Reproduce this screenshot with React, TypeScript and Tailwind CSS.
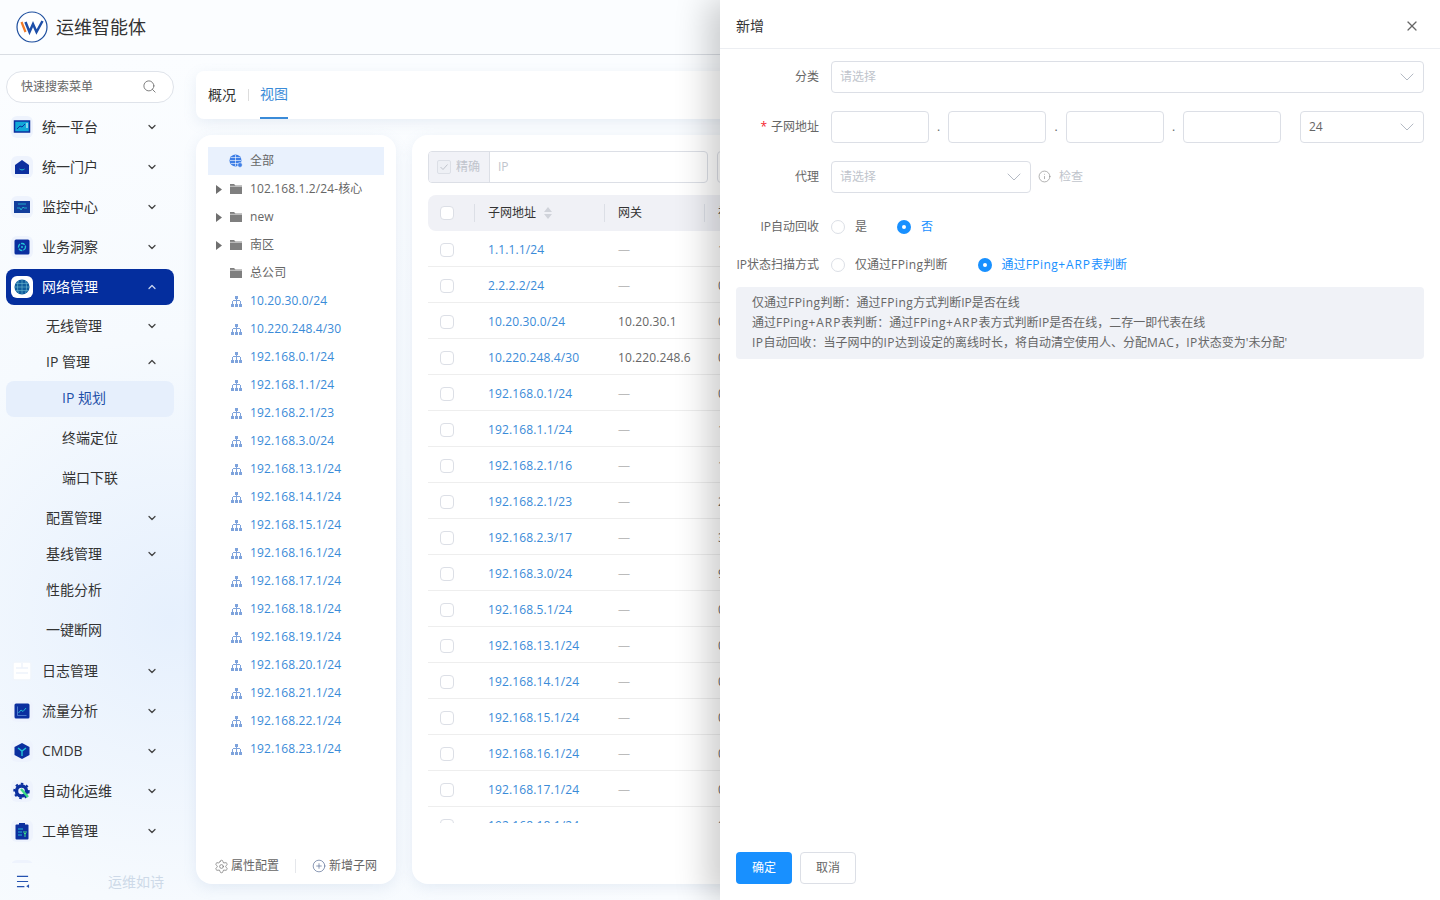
import { ChevronDown, ChevronUp, Search, X, Settings, CirclePlus, Info } from "lucide-react";

const F = "font-['Open_Sans','Noto_Sans_CJK_SC',sans-serif]";

function Ic({ kind }: { kind: string }) {
  const navy = "#0b2f9f";
  const cyan = "#22c3d6";
  if (kind === "log") {
    return (
      <svg width="22" height="22" viewBox="0 0 22 22"><rect x="2" y="2" width="18" height="18" rx="2" fill="#ffffff" stroke="#f0f5fc" strokeWidth="1.5" /><path d="M5 8h12M5 13h12M11 3v5" stroke="#eef3fb" strokeWidth="1.5" /></svg>
    );
  }
  if (kind === "globe") {
    return (
      <svg width="16" height="16" viewBox="0 0 18 18"><circle cx="9" cy="9" r="8.5" fill="#0f5d9c" /><path d="M1 9h16M2 5h14M2 13h14M9 1v16M5 2c-1.500 4-1.500 10 0 14M13 2c1.500 4 1.500 10 0 14" stroke="#6bbad0" strokeWidth="0.7" fill="none" /></svg>
    );
  }
  return (
    <svg width="18" height="18" viewBox="0 0 18 18">
      {kind === "plat" && (<><rect x="1.500" y="3" width="15" height="11" fill="#11a8d8" stroke={navy} strokeWidth="1.500" /><path d="M4 11l3-3 2 1 3-3" stroke={navy} fill="none" strokeWidth="1" /><path d="M14 5v5" stroke="#fff" strokeWidth="1" /></>)}
      {kind === "door" && (<><path d="M9 2l7 5v9H2V7z" fill={navy} /><path d="M6.500 11c1.500 1.200 3.500 1.200 5 0" stroke={cyan} strokeWidth="1" fill="none" /></>)}
      {kind === "mon" && (<><rect x="1" y="3" width="16" height="12" fill="#123e9c" /><path d="M5 6h8M4 10h3l1 2 2-3 1 1h3" stroke={cyan} strokeWidth="0.8" fill="none" /></>)}
      {kind === "biz" && (<><rect x="1.500" y="1.500" width="15" height="15" rx="1.500" fill={navy} /><circle cx="9" cy="9" r="3.500" stroke={cyan} strokeWidth="1.300" fill="none" strokeDasharray="4 1" /><circle cx="9" cy="9" r="1" fill={cyan} /></>)}
      {kind === "flow" && (<><rect x="1.500" y="1.500" width="15" height="15" rx="1.500" fill={navy} /><path d="M4.500 4.500v9h9" stroke="#5b8ad8" strokeWidth="0.8" fill="none" /><path d="M5.500 11l2.500-3 2 1.500 3-3.500" stroke={cyan} strokeWidth="0.9" fill="none" /></>)}
      {kind === "cube" && (<><path d="M9 1l7.500 4v8L9 17l-7.500-4V5z" fill={navy} /><path d="M5 6l4 3 4-3M9 9v5" stroke={cyan} strokeWidth="1.400" fill="none" /></>)}
      {kind === "auto" && (<><circle cx="8.500" cy="9" r="5" fill="none" stroke={navy} strokeWidth="3.500" /><circle cx="8.500" cy="9" r="7.200" fill="none" stroke={navy} strokeWidth="2" strokeDasharray="2.500 3" /><path d="M8 7l7 8" stroke="#3ddc84" strokeWidth="2.400" /></>)}
      {kind === "order" && (<><rect x="2.500" y="2.500" width="13" height="15" rx="1" fill={navy} /><rect x="6" y="1" width="6" height="2.500" fill={navy} /><path d="M5 7h5M5 10h4M5 13h4" stroke={cyan} strokeWidth="0.9" /><path d="M11 9v2l1 1 1-1V9M12 12v3" stroke="#3ddc84" strokeWidth="1" fill="none" /></>)}
    </svg>
  );
}

function Top({ icon, label, active, open, grey }: { icon: string; label: string; active?: boolean; open?: boolean; grey?: boolean }) {
  return (
    <div className={`h-9 shrink-0 mx-1.5 flex items-center rounded-lg pl-[5px] pr-4 ${active ? "bg-[#042e9e]" : ""}`}>
      <div className={`w-[22px] h-[22px] rounded-md flex items-center justify-center shrink-0 ${active ? "bg-white" : grey ? "" : "bg-[#eef3fd]"}`}>
        <Ic kind={icon} />
      </div>
      <span className={`ml-[9px] flex-1 text-sm leading-none ${active ? "text-white" : "text-[#333333]"}`}>{label}</span>
      {open ? <ChevronUp size={12} strokeWidth={2.500} className="text-[#c8d4ee]" /> : <ChevronDown size={12} strokeWidth={2.500} className="text-[#444444]" />}
    </div>
  );
}

function Sub({ label, open }: { label: string; open?: boolean }) {
  return (
    <div className="h-9 shrink-0 mx-1.5 flex items-center pl-10 pr-4">
      <span className="flex-1 text-sm leading-none text-[#333333]">{label}</span>
      {open === undefined ? null : open ? <ChevronUp size={12} strokeWidth={2.500} className="text-[#444444]" /> : <ChevronDown size={12} strokeWidth={2.500} className="text-[#444444]" />}
    </div>
  );
}

function Leaf({ label, active }: { label: string; active?: boolean }) {
  return (
    <div className={`h-9 shrink-0 mx-1.5 flex items-center pl-14 pb-[2px] rounded-lg text-sm leading-none ${active ? "bg-[#e6effc] text-[#1f4fa8]" : "text-[#333333]"}`}>{label}</div>
  );
}

function Sidebar() {
  return (
    <aside className="w-[180px] h-[845px] shrink-0 flex flex-col relative overflow-hidden">
      <div className="mx-1.5 mt-4 h-8 rounded-2xl border border-[#dfe3ea] bg-white flex items-center pl-[14px] pr-4 shrink-0">
        <span className="flex-1 text-xs text-[#666666]">快速搜索菜单</span>
        <Search size={15} strokeWidth={1.500} className="text-[#777777] -mt-[2px]" />
      </div>
      <div className="mt-[6px] flex flex-col gap-1 h-[754px] shrink-0 overflow-hidden">
        <Top icon="plat" label="统一平台" />
        <Top icon="door" label="统一门户" />
        <Top icon="mon" label="监控中心" />
        <Top icon="biz" label="业务洞察" />
        <Top icon="globe" label="网络管理" active open />
        <div className="flex flex-col shrink-0 -mt-px mb-px">
          <Sub label="无线管理" open={false} />
          <Sub label="IP 管理" open />
          <div className="flex flex-col gap-1 mt-px">
            <Leaf label="IP 规划" active />
            <Leaf label="终端定位" />
            <Leaf label="端口下联" />
          </div>
          <div className="mt-[3px]"><Sub label="配置管理" open={false} /></div>
          <Sub label="基线管理" open={false} />
          <Sub label="性能分析" />
          <div className="mt-1"><Sub label="一键断网" /></div>
        </div>
        <Top icon="log" label="日志管理" grey />
        <Top icon="flow" label="流量分析" />
        <Top icon="cube" label="CMDB" />
        <Top icon="auto" label="自动化运维" />
        <Top icon="order" label="工单管理" />
        <Top icon="biz" label="" />
      </div>
      <div className="flex-1 flex items-center">
        <svg className="ml-[16px]" width="14" height="13" viewBox="0 0 15 14"><path d="M1 1.500h12M1 7h12M1 12.500h8" stroke="#2452b0" strokeWidth="1.300" /><path d="M14 10v4l-3-2z" fill="#2452b0" /></svg>
        <span className="ml-[78px] text-sm text-[#cdd9e8]">运维如诗</span>
      </div>
    </aside>
  );
}

function Folder() {
  return <svg width="14" height="12" viewBox="0 0 14 12"><path d="M1 1h4l1.500 1.500H13V11H1z" fill="#7f7f7f" /><path d="M1 3.300h12" stroke="#fff" strokeWidth="0.6" /></svg>;
}

function Net() {
  return <svg width="11" height="11" viewBox="0 0 11 11" fill="#7ea3dc"><rect x="4" y="0" width="3" height="3" /><rect x="0" y="8" width="3" height="3" /><rect x="4" y="8" width="3" height="3" /><rect x="8" y="8" width="3" height="3" /><rect x="2" y="4" width="7" height="1" /><rect x="5" y="3" width="1" height="5" /><rect x="1" y="5" width="1" height="3" /><rect x="9" y="5" width="1" height="3" /></svg>;
}

function Tree() {
  const ips = ["10.20.30.0/24", "10.220.248.4/30", "192.168.0.1/24", "192.168.1.1/24", "192.168.2.1/23", "192.168.3.0/24", "192.168.13.1/24", "192.168.14.1/24", "192.168.15.1/24", "192.168.16.1/24", "192.168.17.1/24", "192.168.18.1/24", "192.168.19.1/24", "192.168.20.1/24", "192.168.21.1/24", "192.168.22.1/24", "192.168.23.1/24"];
  const folders: [string, boolean][] = [["102.168.1.2/24-核心", true], ["new", true], ["南区", true], ["总公司", false]];
  return (
    <div className="w-[200px] h-[749px] shrink-0 bg-white rounded-2xl shadow-[0_4px_14px_rgba(120,150,190,0.14)] flex flex-col pt-3 px-3">
      <div className="h-7 bg-[#e9f1fd] flex items-center pl-[21px] text-xs text-[#666666]">
        <svg width="14" height="14" viewBox="0 0 14 14"><circle cx="6.500" cy="6.500" r="6" fill="#3f7fe6" /><path d="M1 6.500h11M6.500 1v11M2 3.500h9M2 9.500h9" stroke="#fff" strokeWidth="0.6" /><circle cx="11" cy="11" r="2.400" fill="#3f7fe6" stroke="#fff" strokeWidth="0.6" /></svg>
        <span className="ml-[7px]">全部</span>
      </div>
      {folders.map(([n, arrow]) => (
        <div key={n} className="h-7 flex items-center text-xs text-[#666666] tracking-[0.12px]">
          <span className="w-[21px] flex justify-center">{arrow && <svg width="6" height="9" viewBox="0 0 6 9"><path d="M0 0l6 4.500L0 9z" fill="#6f6f6f" /></svg>}</span>
          <Folder />
          <span className="ml-[7px]">{n}</span>
        </div>
      ))}
      {ips.map((n) => (
        <div key={n} className="h-7 flex items-center text-xs text-[#3a8bd8] pl-[21px] tracking-[0.12px]">
          <span className="w-[14px] flex justify-center mr-[7px]"><Net /></span>{n}
        </div>
      ))}
      <div className="flex-1" />
      <div className="h-9 flex items-center text-xs text-[#666666] -mx-3 pl-[18px]">
        <Settings size={15} strokeWidth={1.200} className="text-[#777777]" />
        <span className="ml-[2px]">属性配置</span>
        <span className="mx-4 h-3.5 w-px bg-[#e5e7eb]" />
        <CirclePlus size={14} strokeWidth={1.200} className="text-[#5a6f95]" />
        <span className="ml-[3px]">新增子网</span>
      </div>
    </div>
  );
}

function Check({ disabled }: { disabled?: boolean }) {
  return <span className={`block w-[14px] h-[14px] rounded-sm border border-[#dcdfe6] ${disabled ? "bg-[#eef0f5]" : "bg-white"}`} />;
}

const ROWS: [string, string, string][] = [
  ["1.1.1.1/24", "—", "1"], ["2.2.2.2/24", "—", "0"], ["10.20.30.0/24", "10.20.30.1", "0"], ["10.220.248.4/30", "10.220.248.6", "0"],
  ["192.168.0.1/24", "—", "0"], ["192.168.1.1/24", "—", "1"], ["192.168.2.1/16", "—", "1"], ["192.168.2.1/23", "—", "2"],
  ["192.168.2.3/17", "—", "3"], ["192.168.3.0/24", "—", "9"], ["192.168.5.1/24", "—", "0"], ["192.168.13.1/24", "—", "0"],
  ["192.168.14.1/24", "—", "0"], ["192.168.15.1/24", "—", "0"], ["192.168.16.1/24", "—", "0"], ["192.168.17.1/24", "—", "0"], ["192.168.18.1/24", "—", "0"],
];

function TableCard() {
  return (
    <div className="w-[700px] h-[749px] shrink-0 bg-white rounded-2xl shadow-[0_4px_14px_rgba(120,150,190,0.14)] pt-4 px-4 overflow-hidden">
      <div className="flex gap-[9px]">
        <div className="w-[280px] h-8 rounded border border-[#dcdfe6] flex overflow-hidden shrink-0">
          <div className="w-[61px] bg-[#f1f2f7] border-r border-[#dcdfe6] flex items-center pl-2 text-xs text-[#c0c4cc] gap-[5px]">
            <svg width="14" height="14" viewBox="0 0 14 14"><rect x="0.500" y="0.500" width="13" height="13" rx="1.500" fill="#eef0f5" stroke="#dcdfe6" /><path d="M3.500 7l2.500 2.500 4.500-5" stroke="#c0c4cc" fill="none" /></svg>
            精确
          </div>
          <div className="flex-1 flex items-center pl-2 text-xs text-[#c0c4cc]">IP</div>
        </div>
        <div className="w-[100px] h-8 rounded border border-[#dcdfe6] shrink-0" />
      </div>
      <div className="mt-3 h-[628px] overflow-hidden">
        <div className="h-9 bg-[#f0f1f6] rounded-lg flex items-center text-xs text-[#333333]">
          <div className="w-[60px] pl-3 flex items-center h-full relative"><Check /><span className="absolute right-[13px] top-[9px] h-[18px] w-px bg-[#dcdfe6]" /></div>
          <div className="w-[130px] flex items-center relative h-full">子网地址
            <svg className="ml-2" width="8" height="12" viewBox="0 0 8 12"><path d="M4 0l4 5H0zM4 12l4-5H0z" fill="#d0d3da" /></svg>
            <span className="absolute right-[13px] h-[18px] w-px bg-[#dcdfe6] top-[9px]" />
          </div>
          <div className="w-[100px] flex items-center relative h-full">网关<span className="absolute right-[13px] h-[18px] w-px bg-[#dcdfe6] top-[9px]" /></div>
          <div className="flex-1 whitespace-nowrap">视图</div>
        </div>
        {ROWS.map(([ip, gw, c]) => (
          <div key={ip} className="h-9 pt-[2px] border-b border-[#eeeeee] flex items-center text-xs">
            <div className="w-[60px] pl-3"><Check /></div>
            <div className="w-[130px] text-[#3a8bd8] tracking-[0.12px]">{ip}</div>
            <div className={`w-[100px] tracking-[0.12px] ${gw === "—" ? "text-[#bbbbbb]" : "text-[#666666]"}`}>{gw}</div>
            <div className="flex-1 text-[#666666]">{c}</div>
          </div>
        ))}
      </div>
    </div>
  );
}

function Sel({ text, ph, cls }: { text: string; ph?: boolean; cls: string }) {
  return (
    <div className={`h-8 rounded border border-[#dcdfe6] flex items-center pl-2 pr-[4px] text-xs ${cls}`}>
      <span className={`flex-1 ${ph ? "text-[#c0c4cc]" : "text-[#666666]"}`}>{text}</span>
      <ChevronDown size={24} strokeWidth={1} className="text-[#b4bac4]" />
    </div>
  );
}

function Label({ children }: { children: React.ReactNode }) {
  return <div className="w-[83px] pr-3 box-content text-right text-xs text-[#666666] whitespace-nowrap shrink-0">{children}</div>;
}

function Radio({ on, text }: { on?: boolean; text: React.ReactNode }) {
  return (
    <div className="flex items-center">
      {on ? <span className="w-[14px] h-[14px] rounded-full bg-[#1890ff] flex items-center justify-center"><span className="w-1 h-1 rounded-full bg-white" /></span> : <span className="w-[14px] h-[14px] rounded-full border border-[#dcdfe6] bg-white" />}
      <span className={`ml-[10px] text-xs ${on ? "text-[#1890ff]" : "text-[#666666]"}`}>{text}</span>
    </div>
  );
}

function L({ children }: { children: React.ReactNode }) {
  return <span className="tracking-[0.45px]">{children}</span>;
}

function Drawer() {
  const plus = <span className="tracking-[0.9px]">+ARP</span>;
  return (
    <div className="absolute top-0 right-0 bottom-0 w-[720px] bg-white shadow-[-12px_0_32px_rgba(0,0,0,0.2)] flex flex-col z-10">
      <div className="h-[49px] border-b border-[#eceef2] flex items-center justify-between pl-4 pr-5 pt-[3px] shrink-0">
        <span className="text-sm text-[#333333]">新增</span>
        <X size={16} strokeWidth={1.800} className="text-[#666666]" />
      </div>
      <div className="flex-1 px-4 pt-3">
        <div className="flex items-center h-8">
          <Label>分类</Label>
          <Sel text="请选择" ph cls="flex-1" />
        </div>
        <div className="flex items-center h-8 mt-[18px]">
          <Label><span className="text-[#f5222d] mr-1">*</span>子网地址</Label>
          <div className="w-[98px] h-8 rounded border border-[#dcdfe6]" />
          <span className="w-[19px] text-center text-xs text-[#666666]">.</span>
          <div className="w-[98px] h-8 rounded border border-[#dcdfe6]" />
          <span className="w-[20px] text-center text-xs text-[#666666]">.</span>
          <div className="w-[98px] h-8 rounded border border-[#dcdfe6]" />
          <span className="w-[19px] text-center text-xs text-[#666666]">.</span>
          <div className="w-[98px] h-8 rounded border border-[#dcdfe6]" />
          <Sel text="24" cls="w-[124px] ml-[19px]" />
        </div>
        <div className="flex items-center h-8 mt-[18px]">
          <Label>代理</Label>
          <Sel text="请选择" ph cls="w-[200px]" />
          <Info size={13} strokeWidth={1.200} className="ml-[7px] -mt-[2px] text-[#888888]" />
          <span className="ml-[8px] text-xs text-[#c0c4cc]">检查</span>
        </div>
        <div className="flex items-center h-[18px] mt-[25px]">
          <Label>IP自动回收</Label>
          <div className="flex items-center gap-[30px]"><Radio text="是" /><Radio text="否" on /></div>
        </div>
        <div className="flex items-center h-[18px] mt-5">
          <Label>IP状态扫描方式</Label>
          <div className="flex items-center gap-[30px]"><Radio text={<>仅通过<L>FPing</L>判断</>} /><Radio text={<>通过<L>FPing</L>{plus}表判断</>} on /></div>
        </div>
        <div className="mt-[13px] h-[72px] rounded bg-[#f0f2f7] px-4 flex flex-col justify-center text-xs leading-5 text-[#666666]">
          <div>仅通过<L>FPing</L>判断：通过<L>FPing</L>方式判断IP是否在线</div>
          <div>通过<L>FPing</L>{plus}表判断：通过<L>FPing</L>{plus}表方式判断IP是否在线，二存一即代表在线</div>
          <div><L>IP</L>自动回收：当子网中的<L>IP</L>达到设定的离线时长，将自动清空使用人、分配<L>MAC</L>，<L>IP</L>状态变为'未分配'</div>
        </div>
      </div>
      <div className="h-[48px] flex gap-2 pl-4 shrink-0">
        <div className="w-14 h-8 rounded bg-[#1890ff] text-white text-xs flex items-center justify-center">确定</div>
        <div className="w-14 h-8 rounded border border-[#dcdfe6] bg-white text-[#666666] text-xs flex items-center justify-center">取消</div>
      </div>
    </div>
  );
}

export default function App() {
  return (
    <div className={`w-[1440px] h-[900px] relative overflow-hidden bg-[radial-gradient(circle_at_170px_620px,#e6f0fd_0%,#f6fafe_20%,#fbfdff_40%)] ${F}`}>
      <header className="h-[55px] border-b border-[#d9dde3] flex items-center pl-4 bg-[#fbfdff]">
        <svg width="32" height="32" viewBox="0 0 32 32">
          <circle cx="16" cy="16" r="15" fill="#fff" stroke="#1d4e9e" strokeWidth="1.200" />
          <path d="M5.500 11l4 10" stroke="#f07a28" strokeWidth="2.200" />
          <path d="M9.500 11l4 10 3.500-8 3.500 8 6-11" stroke="#1d4ea8" strokeWidth="2.500" fill="none" />
        </svg>
        <span className="ml-2 text-lg text-[#333333]">运维智能体</span>
      </header>
      <div className="flex">
        <Sidebar />
        <main className="flex-1 pl-4 pt-4 min-w-0">
          <div className="h-12 bg-white rounded-t-lg rounded-bl-lg shadow-[0_4px_14px_rgba(120,150,190,0.14)] flex items-center pl-3 text-sm">
            <span className="text-[#333333]">概况</span>
            <span className="ml-3 mr-[11px] h-3 w-px bg-[#dddddd]" />
            <div className="h-full flex items-center text-[#3a8bd8] border-b-2 border-[#3a8bd8]">视图</div>
          </div>
          <div className="flex gap-4 mt-4">
            <Tree />
            <TableCard />
          </div>
        </main>
      </div>
      <Drawer />
    </div>
  );
}
